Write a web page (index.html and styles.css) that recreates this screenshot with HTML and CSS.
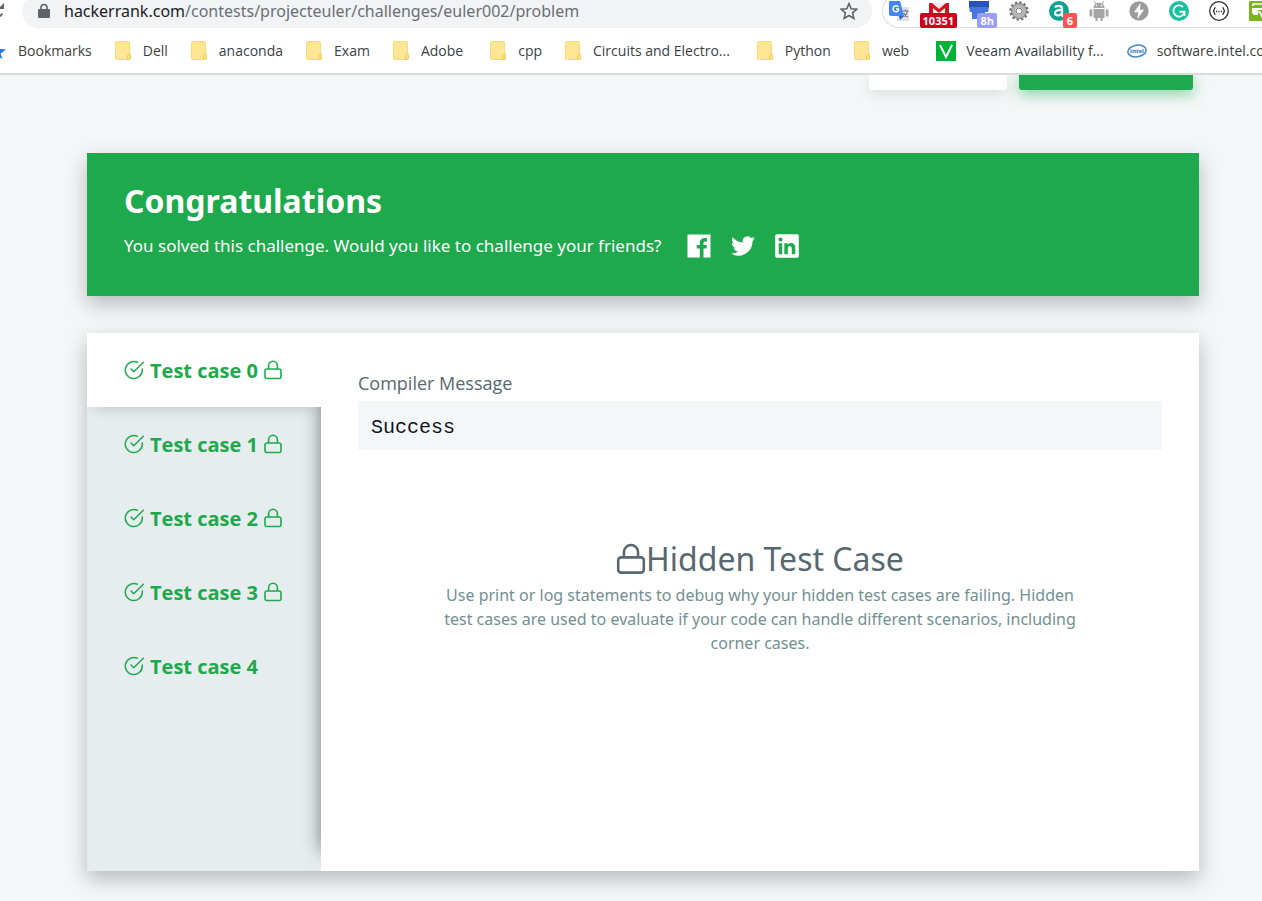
FILE: index.html
```html
<!DOCTYPE html>
<html lang="en">
<head>
<meta charset="utf-8">
<title>Project Euler #2 | HackerRank</title>
<link rel="stylesheet" href="styles.css">
</head>
<body>
<svg class="sprite" aria-hidden="true">
  <symbol id="folder" viewBox="0 0 16 19"><path d="M1.5.5h12a1 1 0 0 1 1 1v11.500l1 1v3.500l-1 1h-13a1 1 0 0 1-1-1v-16a1 1 0 0 1 1-1z" fill="#ffe694" stroke="#f9db72"/><path d="M12.500 18v-3.500l1-1.500h1.500l.5 1.500v3.500z" fill="#ffe28a" stroke="#f3cc52"/></symbol>
  <symbol id="check" viewBox="0 0 20 20"><path d="M18.300 9v1.200a8.500 8.500 0 1 1-5-7.900M19.300 2.300 9.700 11.700 7 9" fill="none" stroke="currentColor" stroke-width="1.500" stroke-linecap="round" stroke-linejoin="round"/></symbol>
  <symbol id="lock" viewBox="0 0 18 20"><path d="M2.800 9h12.400a1.800 1.800 0 0 1 1.800 1.800v5.900a1.800 1.800 0 0 1-1.800 1.800H2.800A1.800 1.800 0 0 1 1 16.700v-5.900A1.800 1.800 0 0 1 2.800 9zM4.600 9V5.700a4.400 4.400 0 0 1 8.800 0V9" fill="none" stroke="currentColor" stroke-width="1.600"/></symbol>
</svg>

<header class="browser">
  <div class="toolbar">
    <svg class="reload" viewBox="0 0 4 34"><path d="M4 9v6H0v-2z" fill="#5f6368"/><path d="M0 22.500 2.500 19.500" stroke="#5f6368" stroke-width="1.800"/></svg>
    <div class="omnibox">
      <svg class="site-lock" viewBox="0 0 12 16"><path d="M1.500 6h9A1.300 1.300 0 0 1 12 7.300v6.400a1.300 1.300 0 0 1-1.300 1.300H1.300A1.300 1.300 0 0 1 0 13.700V7.300A1.300 1.300 0 0 1 1.500 6z" fill="#5f6368"/><path d="M3 7V4.500a3 3 0 0 1 6 0V7" fill="none" stroke="#5f6368" stroke-width="1.600"/></svg>
      <span class="url"><span class="host">hackerrank.com</span>/contests/projecteuler/challenges/euler002/problem</span>
      <svg class="star" viewBox="0 0 18 18"><path d="m9 1.500 2.200 5.200 5.600.5-4.200 3.700 1.200 5.500L9 13.500l-4.800 2.900 1.200-5.500L1.200 7.200l5.600-.5z" fill="none" stroke="#5f6368" stroke-width="1.600"/></svg>
    </div>
    <div class="extensions">
      <span class="ext"><svg viewBox="0 0 20 20"><rect x="8" y="6" width="12" height="14" rx="1" fill="#dfe1e4"/><path d="M1 0h10l4 15H2a2 2 0 0 1-2-2V1a1 1 0 0 1 1-1z" fill="#4285f4"/><path d="m10 15 5 0-4 4z" fill="#2f60c4"/><path d="M9.500 6A3 3 0 1 0 9.500 9.500V8H7" fill="none" stroke="#fff" stroke-width="1.400"/><path d="M13.500 10h6M16.500 8.500V10M18.500 10c-.5 3-2.500 5-4 6M14.500 12c1 2 2.500 3 4.500 4" fill="none" stroke="#6d7986" stroke-width="1.200"/></svg></span>
      <span class="ext"><svg viewBox="0 0 20 20"><path d="M0 2h20v14H0z" fill="#f3eeee"/><path d="M0 16V2h3l7 6 7-6h3v14h-4V7l-6 5-6-5v9z" fill="#d5121f"/></svg><b class="badge badge-mail">10351</b></span>
      <span class="ext"><svg viewBox="0 0 20 20"><path d="M0 0h20v7H0z" fill="#2853ba"/><path d="M0 6h20l-1 5h-3v7H3v-7H1z" fill="#4677df"/></svg><b class="badge badge-time">8h</b></span>
      <span class="ext"><svg viewBox="0 0 20 20"><circle cx="10" cy="10" r="8.500" fill="none" stroke="#777" stroke-width="2.500" stroke-dasharray="2.400 2.050"/><circle cx="10" cy="10" r="5.500" fill="none" stroke="#b5b5b5" stroke-width="4"/><circle cx="10" cy="10" r="7.500" fill="none" stroke="#808080"/><circle cx="10" cy="10" r="3" fill="#fff" stroke="#777"/></svg></span>
      <span class="ext"><svg viewBox="0 0 20 20"><circle cx="10" cy="10" r="10" fill="#0ca391"/><path d="M6 6.500C7 4.200 13 4 13 7.500V14q0 1.200 2 1M13 9c-4-.2-7 .5-7 3 0 3.500 6 3 7 0" fill="none" stroke="#fff" stroke-width="2.300"/></svg><b class="badge badge-count">6</b></span>
      <span class="ext"><svg viewBox="0 0 20 20" fill="#a6a6a6"><path d="M4.500 7c0-7 11-7 11 0zM4.500 8h11v9h-2v3h-2v-3h-3v3h-2v-3h-2zM.5 8.500h2.800v7H.5zM16.700 8.500h2.800v7h-2.800z"/><path d="m5 0 2 3m8-3-2 3" stroke="#a6a6a6"/><circle cx="7.500" cy="4.500" r=".8" fill="#fff"/><circle cx="12.500" cy="4.500" r=".8" fill="#fff"/></svg></span>
      <span class="ext"><svg viewBox="0 0 20 20"><circle cx="10" cy="10" r="9.700" fill="#9b9b9b"/><path d="M11.500 2 5 11.300h4L8.500 18 15 8.700h-4z" fill="#fff"/></svg></span>
      <span class="ext"><svg viewBox="0 0 20 20"><circle cx="10" cy="10" r="10" fill="#15c39a"/><path d="M14 6a5.600 5.600 0 1 0 1.500 5.300M10.500 10.800h5v4" fill="none" stroke="#fff" stroke-width="1.900"/></svg></span>
      <span class="ext"><svg viewBox="0 0 20 20"><circle cx="10" cy="10" r="9.300" fill="#fff" stroke="#333" stroke-width="1.300"/><path d="M6.500 6.500C5 6.500 6 9.700 4 10c2 .3 1 3.500 2.500 3.500M13.500 6.500c1.500 0 .5 3.200 2.500 3.500-2 .3-1 3.500-2.500 3.500M7 10.500h1.200m1.200 0h1.200m1.200 0H13" fill="none" stroke="#333" stroke-width="1.300"/></svg></span>
      <span class="ext"><svg viewBox="0 0 20 20"><rect width="20" height="20" rx="1" fill="#7ab51d"/><path d="M4 5V3h16" fill="none" stroke="#fff" stroke-width="1.600"/><path d="M3 7h17v2H9v5H5l-2-2z" fill="#fff"/><path d="M7 11h4l2 5h7" fill="none" stroke="#fff" stroke-width="1.600"/></svg></span>
    </div>
  </div>
  <nav class="bookmarks">
    <a class="bookmark" href="#"><svg class="mark-star" viewBox="0 0 6 16"><path d="m-4 0 3 6 7 .5-5.500 4 2 5.500L-4 12z" fill="#1a73e8"/></svg>Bookmarks</a>
    <a class="bookmark" href="#"><svg class="folder"><use href="#folder"/></svg>Dell</a>
    <a class="bookmark" href="#"><svg class="folder"><use href="#folder"/></svg>anaconda</a>
    <a class="bookmark" href="#"><svg class="folder"><use href="#folder"/></svg>Exam</a>
    <a class="bookmark spaced" href="#"><svg class="folder"><use href="#folder"/></svg>Adobe</a>
    <a class="bookmark" href="#"><svg class="folder"><use href="#folder"/></svg>cpp</a>
    <a class="bookmark spaced" href="#"><svg class="folder"><use href="#folder"/></svg>Circuits and Electro...</a>
    <a class="bookmark" href="#"><svg class="folder"><use href="#folder"/></svg>Python</a>
    <a class="bookmark spaced" href="#"><svg class="folder"><use href="#folder"/></svg>web</a>
    <a class="bookmark site" href="#"><svg class="favicon" viewBox="0 0 20 20"><path d="M0 0h20v20H0z" fill="#00b336"/><path d="m4 4 6 12 6-12" fill="none" stroke="#fff" stroke-width="2"/></svg>Veeam Availability f...</a>
    <a class="bookmark site" href="#"><svg class="favicon" viewBox="0 0 20 20"><ellipse cx="10" cy="10" rx="9.200" ry="5.800" fill="#fff" stroke="#3f86c6" stroke-width="1.500" transform="rotate(-8 10 10)"/><text x="10" y="12" text-anchor="middle" class="intel">intel</text></svg>software.intel.co</a>
  </nav>
</header>

<main class="page">
  <div class="actions">
    <button class="action run" type="button" aria-label="Run Code"></button>
    <button class="action submit" type="button" aria-label="Submit Code"></button>
  </div>

  <section class="banner">
    <h1>Congratulations</h1>
    <div class="share">
      <p>You solved this challenge. Would you like to challenge your friends?</p>
      <a href="#" aria-label="Facebook"><svg viewBox="0 0 24 24"><path d="M.5.500h23v23h-7v-9h3l.4-3.500h-3.400V9.200c0-1 .3-1.700 1.700-1.700H20V4.200c-4.500-.7-7.200 1-7.200 4.500V11H9.700v3.500h3.100v9H.5z" fill="#fff"/></svg></a>
      <a href="#" aria-label="Twitter"><svg viewBox="0 0 24 24"><path d="M24 4.600a10 10 0 0 1-2.800.8 5 5 0 0 0 2.100-2.700c-1 .6-2 1-3.100 1.200a4.900 4.900 0 0 0-8.400 4.500A14 14 0 0 1 1.700 3.200a4.900 4.900 0 0 0 1.500 6.500 5 5 0 0 1-2.200-.6v.1a4.900 4.900 0 0 0 3.900 4.800 5 5 0 0 1-2.200.1 4.900 4.900 0 0 0 4.600 3.400A10 10 0 0 1 0 19.500a14 14 0 0 0 21.500-12.400A10 10 0 0 0 24 4.600z" fill="#fff"/></svg></a>
      <a href="#" aria-label="LinkedIn"><svg viewBox="0 0 24 24"><path fill-rule="evenodd" d="M1.800.3h20.400a1.600 1.600 0 0 1 1.600 1.600v20.200a1.600 1.600 0 0 1-1.600 1.600H1.800A1.600 1.600 0 0 1 .2 22.100V1.900A1.600 1.600 0 0 1 1.800.300zM3.700 9.200V20.300h3.500V9.200zM5.500 3.500a2 2 0 1 0 0 4.100 2 2 0 0 0 0-4.100zM9.300 9.200V20.300h3.500v-5.500c0-3.800 4-3.600 4 0v5.500h3.500v-6.500c0-5.500-5.500-5.800-7.600-3V9.200z" fill="#fff"/></svg></a>
    </div>
  </section>

  <section class="results">
    <div class="tabs">
      <button class="tab active" type="button"><svg class="check"><use href="#check"/></svg>Test case 0<svg class="lock"><use href="#lock"/></svg></button>
      <button class="tab" type="button"><svg class="check"><use href="#check"/></svg>Test case 1<svg class="lock"><use href="#lock"/></svg></button>
      <button class="tab" type="button"><svg class="check"><use href="#check"/></svg>Test case 2<svg class="lock"><use href="#lock"/></svg></button>
      <button class="tab" type="button"><svg class="check"><use href="#check"/></svg>Test case 3<svg class="lock"><use href="#lock"/></svg></button>
      <button class="tab" type="button"><svg class="check"><use href="#check"/></svg>Test case 4</button>
    </div>
    <div class="detail">
      <h2>Compiler Message</h2>
      <pre>Success</pre>
      <div class="hidden-case">
        <h3><svg class="big-lock"><use href="#lock"/></svg>Hidden Test Case</h3>
        <p>Use print or log statements to debug why your hidden test cases are failing. Hidden test cases are used to evaluate if your code can handle different scenarios, including corner cases.</p>
      </div>
    </div>
  </section>
</main>
</body>
</html>
```

FILE: styles.css
```css
* {
  box-sizing: border-box;
}

body {
  margin: 0;
  min-height: 100vh;
  overflow-x: hidden;
  background: #f3f7f7;
  color: #576871;
  font-family: "Open Sans", "Noto Sans", sans-serif;
}

h1, h2, h3, p, pre {
  margin: 0;
}

svg {
  display: block;
  flex: none;
}

.sprite {
  position: absolute;
  width: 0;
  height: 0;
}

/* Browser chrome */
.browser {
  position: relative;
  z-index: 2;
  height: 75px;
  overflow: hidden;
  background: #fff;
  border-bottom: 2px solid #d9dbdf;
}

.toolbar {
  display: flex;
  align-items: flex-end;
  height: 28px;
}

.reload {
  width: 4px;
  height: 34px;
  margin-right: 18px;
}

.omnibox {
  display: flex;
  flex: 1;
  align-items: center;
  min-width: 0;
  height: 34px;
  padding: 0 14px 0 16px;
  border-radius: 17px;
  background: #f1f3f4;
}

.site-lock {
  width: 12px;
  height: 16px;
  margin-right: 14px;
}

.url {
  flex: 1;
  overflow: hidden;
  color: #6b6f74;
  font-family: "Noto Sans", sans-serif;
  font-size: 16px;
  line-height: 24px;
  white-space: nowrap;
}

.host {
  color: #202124;
}

.star {
  width: 18px;
  height: 18px;
}

.extensions {
  display: flex;
  gap: 20px;
  align-items: center;
  width: 380px;
  height: 34px;
  margin-left: 10px;
  padding-left: 6px;
  border: 1px solid #dadce0;
  border-right: 0;
  border-radius: 17px 0 0 17px;
}

.ext {
  position: relative;
  flex: none;
  width: 20px;
}

.ext svg {
  width: 20px;
  height: 20px;
}

.badge {
  position: absolute;
  top: 12px;
  right: -8px;
  padding: 0 3px;
  border-radius: 2px;
  color: #fff;
  font-size: 11px;
  line-height: 15px;
}

.badge-mail {
  background: #d0021b;
}

.badge-time {
  background: #9a9cff;
}

.badge-count {
  padding: 0 4px;
  background: #ff5252;
}

.bookmarks {
  display: flex;
  gap: 23px;
  align-items: center;
  height: 45px;
}

.bookmark {
  display: flex;
  flex: none;
  gap: 12px;
  align-items: center;
  color: #3c4043;
  font-size: 14px;
  line-height: 20px;
  text-decoration: none;
}

.spaced {
  margin-right: 4px;
}

.site {
  gap: 10px;
}

.mark-star {
  width: 6px;
  height: 16px;
}

.folder {
  width: 16px;
  height: 19px;
}

.favicon {
  width: 20px;
  height: 20px;
}

.intel {
  fill: #1e6bb5;
  font-size: 6px;
  font-weight: 700;
}

/* Page */
.page {
  padding: 0 63px 30px 87px;
}

.actions {
  display: flex;
  gap: 12px;
  justify-content: flex-end;
  padding-right: 6px;
}

.action {
  height: 15px;
  padding: 0;
  border: 0;
  border-radius: 0 0 3px 3px;
}

.run {
  width: 138px;
  background: #fff;
  box-shadow: 0 4px 14px rgba(0, 0, 0, .1);
}

.submit {
  width: 174px;
  background: #1ea94c;
  box-shadow: 0 4px 14px rgba(30, 169, 76, .5);
}

.banner {
  margin-top: 63px;
  padding: 25px 37px 29px;
  background: #1ea94c;
  box-shadow: 0 8px 20px rgba(0, 0, 0, .25);
  color: #fff;
}

.banner h1 {
  font-family: "Noto Sans", sans-serif;
  font-size: 32px;
  font-weight: 700;
  line-height: 46px;
}

.share {
  display: flex;
  gap: 20px;
  align-items: center;
  height: 43px;
}

.share p {
  margin-right: 6px;
  font-family: "Noto Sans", sans-serif;
  font-size: 17px;
  line-height: 24px;
}

.share svg {
  width: 24px;
  height: 24px;
}

.results {
  display: flex;
  min-height: 538px;
  margin-top: 37px;
  background: #fff;
  box-shadow: 0 8px 20px rgba(0, 0, 0, .25);
}

.tabs {
  position: relative;
  flex: none;
  width: 234px;
  overflow: hidden;
  background: #e6edee;
}

/* Shade cast by the detail pane onto the tab list */
.tabs::after {
  content: "";
  position: absolute;
  top: 0;
  bottom: 20px;
  left: 100%;
  width: 20px;
  box-shadow: 0 0 18px rgba(0, 0, 0, .5);
}

.tab {
  display: flex;
  gap: 6px;
  align-items: center;
  width: 100%;
  height: 74px;
  padding: 0 37px;
  border: 0;
  background: none;
  color: #1ea94c;
  font-family: inherit;
  font-size: 20px;
  font-weight: 700;
  white-space: nowrap;
}

.active {
  position: relative;
  z-index: 1;
  background: #fff;
  box-shadow: 0 6px 14px -6px rgba(0, 0, 0, .2);
}

.check {
  width: 20px;
  height: 20px;
}

.lock {
  width: 18px;
  height: 20px;
}

.detail {
  flex: 1;
  min-width: 0;
  padding: 37px;
}

.detail h2 {
  margin-bottom: 4px;
  font-size: 18px;
  font-weight: 400;
  line-height: 27px;
}

.detail pre {
  padding: 14px 13px 10px;
  background: #f3f7f7;
  color: #0e141e;
  font-family: "Liberation Mono", monospace;
  font-size: 20px;
  line-height: 25px;
}

.hidden-case {
  width: 80%;
  margin: 85px auto 0;
  font-family: "Noto Sans", sans-serif;
  text-align: center;
}

.hidden-case h3 {
  display: flex;
  align-items: center;
  justify-content: center;
  font-size: 32px;
  font-weight: 400;
  line-height: 48px;
}

.big-lock {
  width: 30px;
  height: 32px;
}

.hidden-case p {
  color: #738f93;
  font-size: 16px;
  line-height: 24px;
}
```
